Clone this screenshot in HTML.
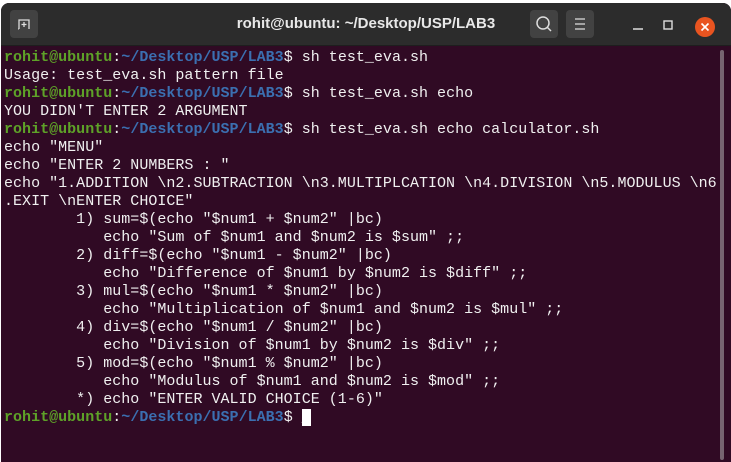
<!DOCTYPE html><html><head><style>
body{margin:0;width:731px;height:462px;background:#fff;overflow:hidden;position:relative}
.win{position:absolute;left:1px;top:3px;width:730px;height:459px;background:#300a24;border-radius:8px 8px 0 0;overflow:hidden}
.tb{position:absolute;left:0;top:0;width:730px;height:42px;background:#2c2c2c;border-bottom:1px solid #1e1e1e}
.title{position:absolute;left:0;width:730px;top:12px;text-align:center;color:#e8e8e8;font:bold 15px "Liberation Sans",sans-serif}
.btn{position:absolute;top:7px;width:28px;height:28px;background:#424242;border-radius:4px}
pre{position:absolute;left:3px;top:46px;margin:0;font:15px/18px "Liberation Mono",monospace;color:#f0f0f0;letter-spacing:0.02px}
.g{color:#5ea228;font-weight:bold}.b{color:#3b6fb0;font-weight:bold}
.cur{background:#fff;color:#fff}
.sb{position:absolute;left:719px;top:47px;width:4px;height:410px;background:#8a7a85;border-radius:2px;opacity:.8}
</style></head><body><div class="win">
<div class="tb">
<div class="btn" style="left:9px"><svg width="28" height="28"><path d="M9 19V10h10v9M14 12v5M11.5 14.5h5" stroke="#ddd" fill="none" stroke-width="1.3"/><path d="M9 19h-1" stroke="#ddd"/></svg></div>
<div class="title">rohit@ubuntu: ~/Desktop/USP/LAB3</div>
<div class="btn" style="left:529px"><svg width="28" height="28"><circle cx="13" cy="13" r="6" stroke="#ddd" fill="none" stroke-width="1.5"/><path d="M17 17l4 4" stroke="#ddd" stroke-width="1.5"/></svg></div>
<div class="btn" style="left:565px"><svg width="28" height="28"><path d="M9 9h10M9 14h10M9 19h10" stroke="#ddd" stroke-width="1.3"/></svg></div>
<svg style="position:absolute;left:630px;top:10px" width="100" height="30"><path d="M2 16h10" stroke="#ddd" stroke-width="1.5"/><rect x="33" y="8" width="8" height="8" stroke="#ddd" fill="none" stroke-width="1.4"/><circle cx="74" cy="14" r="10" fill="#e95420"/><path d="M70.5 10.5l7 7M77.5 10.5l-7 7" stroke="#fff" stroke-width="1.6"/></svg>
</div>
<pre><span class="g">rohit@ubuntu</span>:<span class="b">~/Desktop/USP/LAB3</span>$ sh test_eva.sh
Usage: test_eva.sh pattern file
<span class="g">rohit@ubuntu</span>:<span class="b">~/Desktop/USP/LAB3</span>$ sh test_eva.sh echo
YOU DIDN'T ENTER 2 ARGUMENT
<span class="g">rohit@ubuntu</span>:<span class="b">~/Desktop/USP/LAB3</span>$ sh test_eva.sh echo calculator.sh
echo "MENU"
echo "ENTER 2 NUMBERS : "
echo "1.ADDITION \n2.SUBTRACTION \n3.MULTIPLCATION \n4.DIVISION \n5.MODULUS \n6
.EXIT \nENTER CHOICE"
        1) sum=$(echo "$num1 + $num2" |bc)
           echo "Sum of $num1 and $num2 is $sum" ;;
        2) diff=$(echo "$num1 - $num2" |bc)
           echo "Difference of $num1 by $num2 is $diff" ;;
        3) mul=$(echo "$num1 * $num2" |bc)
           echo "Multiplication of $num1 and $num2 is $mul" ;;
        4) div=$(echo "$num1 / $num2" |bc)
           echo "Division of $num1 by $num2 is $div" ;;
        5) mod=$(echo "$num1 % $num2" |bc)
           echo "Modulus of $num1 and $num2 is $mod" ;;
        *) echo "ENTER VALID CHOICE (1-6)"
<span class="g">rohit@ubuntu</span>:<span class="b">~/Desktop/USP/LAB3</span>$ <span class="cur">_</span></pre>
<div class="sb"></div>
</div></body></html>
